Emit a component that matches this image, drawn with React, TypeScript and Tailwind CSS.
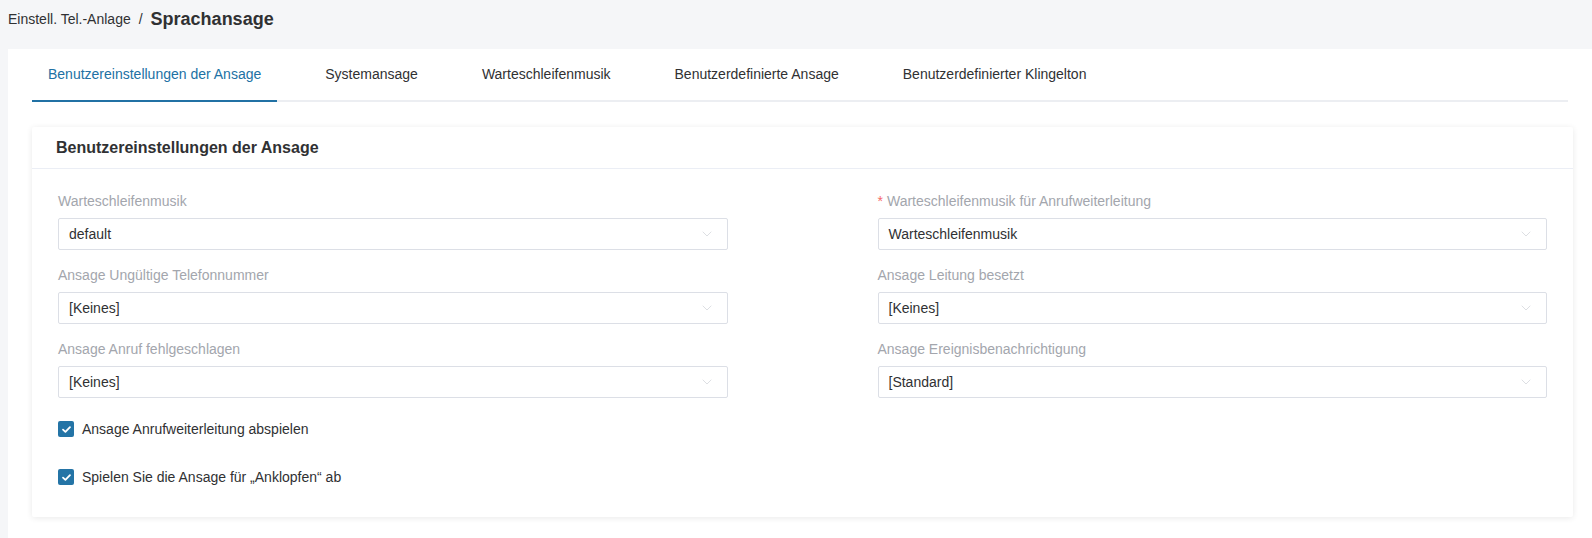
import { ChevronDown } from 'lucide-react'

const tabs = [
  'Benutzereinstellungen der Ansage',
  'Systemansage',
  'Warteschleifenmusik',
  'Benutzerdefinierte Ansage',
  'Benutzerdefinierter Klingelton',
]

const fields = [
  { label: 'Warteschleifenmusik', value: 'default' },
  { label: 'Warteschleifenmusik für Anrufweiterleitung', value: 'Warteschleifenmusik', required: true },
  { label: 'Ansage Ungültige Telefonnummer', value: '[Keines]' },
  { label: 'Ansage Leitung besetzt', value: '[Keines]' },
  { label: 'Ansage Anruf fehlgeschlagen', value: '[Keines]' },
  { label: 'Ansage Ereignisbenachrichtigung', value: '[Standard]' },
]

function Select({ label, value, required }: { label: string; value: string; required?: boolean }) {
  return (
    <div className="flex flex-col">
      <label className="h-[20px] text-[14px] leading-[20px] text-[#a3a6ad]">
        {required && <span className="mr-1 text-[#f56c6c]">*</span>}
        {label}
      </label>
      <div className="mt-[7px] flex h-[32px] items-center justify-between rounded-[2px] border border-[#dcdfe6] bg-white pl-[10px] pr-[12px]">
        <span className="text-[14px] text-[#303133]">{value}</span>
        <ChevronDown className="size-[16px] text-[#ccced4]" strokeWidth={1} />
      </div>
    </div>
  )
}

function Check({ label }: { label: string }) {
  return (
    <label className="flex h-[20px] items-center gap-[8px]">
      <span className="flex size-[16px] items-center justify-center rounded-[2px] bg-[#2474a6]">
        <svg viewBox="0 0 12 12" className="size-[11px]" fill="none">
          <path d="M2.2 6.2 4.8 8.6 9.8 3.4" stroke="white" strokeWidth="2" strokeLinecap="round" strokeLinejoin="round" />
        </svg>
      </span>
      <span className="text-[14px] text-[#303133]">{label}</span>
    </label>
  )
}

export default function App() {
  return (
    <div className="min-h-[538px] bg-[#f5f6f8] font-['Liberation_Sans',Arial,sans-serif]">
      <div className="flex h-[49px] items-center gap-[8px] pb-[10px] pl-[8px]">
        <span className="text-[14px] text-[#303133]">Einstell. Tel.-Anlage</span>
        <span className="text-[14px] text-[#303133]">/</span>
        <span className="text-[18px] font-bold text-[#303133]">Sprachansage</span>
      </div>

      <div className="ml-[8px] min-h-[489px] bg-white pl-[24px] pr-[19px] pt-[2px] pb-[20px]">
        <div className="mr-[5px] flex border-b-2 border-[#eceef2]">
          {tabs.map((t, i) => (
            <div
              key={t}
              className={
                i === 0
                  ? '-mb-[2px] mr-[32px] border-b-2 border-[#2171a4] px-[16px] pt-[13px] pb-[15px] text-[14px] text-[#2171a4]'
                  : '-mb-[2px] mr-[32px] border-b-2 border-transparent px-[16px] pt-[13px] pb-[15px] text-[14px] text-[#303133]'
              }
            >
              {t}
            </div>
          ))}
        </div>

        <div className="mt-[25px] rounded-[2px] bg-white shadow-[0_1px_6px_rgba(0,0,0,0.09)]">
          <div className="flex h-[42px] items-center border-b border-[#ebeef5] px-[24px] text-[16px] font-bold text-[#303133]">
            Benutzereinstellungen der Ansage
          </div>
          <div className="px-[26px] pt-[22px] pb-[30px]">
            <div className="grid grid-cols-2 gap-x-[150px] gap-y-[15px]">
              {fields.map(f => (
                <Select key={f.label} {...f} />
              ))}
            </div>
            <div className="mt-[21px] flex flex-col gap-[28px]">
              <Check label="Ansage Anrufweiterleitung abspielen" />
              <Check label="Spielen Sie die Ansage für „Anklopfen“ ab" />
            </div>
          </div>
        </div>
      </div>
    </div>
  )
}
